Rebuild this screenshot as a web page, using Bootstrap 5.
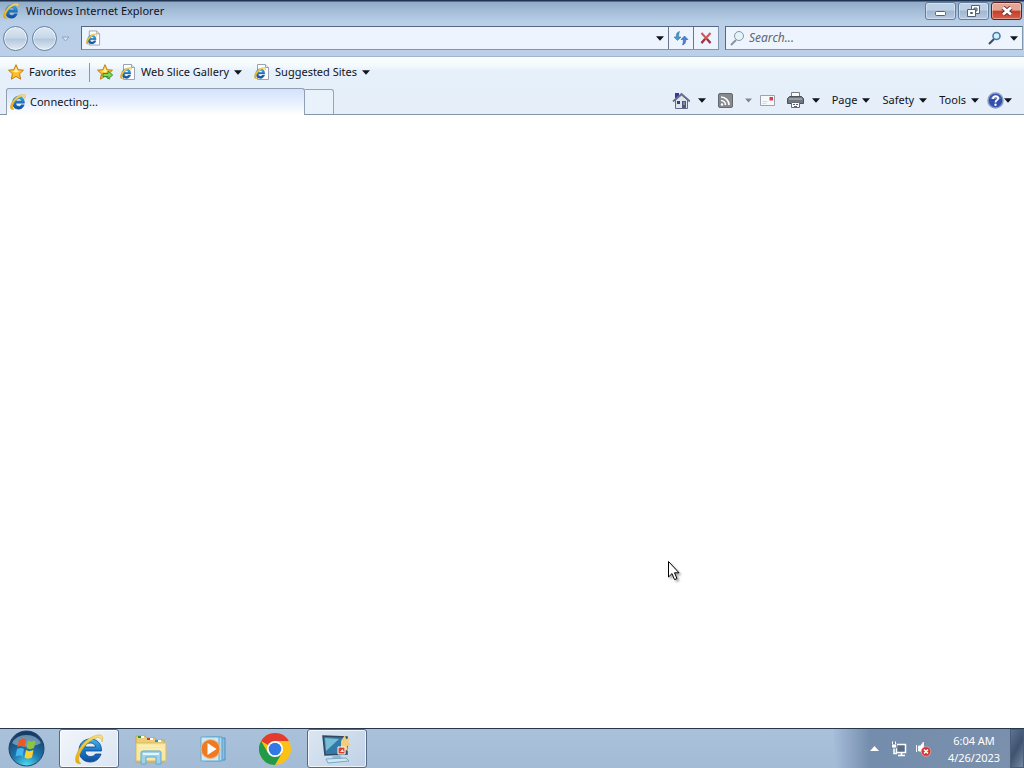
<!DOCTYPE html>
<html lang="en">
<head>
<meta charset="utf-8">
<meta name="viewport" content="width=device-width, initial-scale=1">
<title>Windows Internet Explorer</title>
<link href="https://cdn.jsdelivr.net/npm/bootstrap@5.3.0/dist/css/bootstrap.min.css" rel="stylesheet">
<style>
body{font-family:"Noto Sans","Open Sans",sans-serif;font-size:11px;line-height:16px;color:#10141c;background:#fff;overflow:hidden}
svg{display:block;flex:none}
button{font:inherit;color:inherit;border:0;background:none;padding:0;display:flex;align-items:center}
.title-bar{height:22px;background:linear-gradient(#1d3350 0,#1d3350 1px,#91abc8 2px,#a6bed9 12px,#b9cfe8);padding:0 2px 0 3px}
.title-bar h1{font-size:11px;line-height:20px;font-weight:400;margin-left:7px}
.win-controls{gap:2px}
.win-btn{width:31px;height:18px;justify-content:center;border:1px solid #637d9c;border-radius:3px;background:linear-gradient(#bccfe5 45%,#9fb7d2 50%,#b7cbe1);box-shadow:inset 0 0 0 1px #ffffff60}
.win-close{border-color:#5d2222;background:linear-gradient(#e2a596 45%,#c63d28 50%,#d4614a)}
.nav-bar{height:35px;background:linear-gradient(#b9cfe8,#bccfe8);border-bottom:1px solid #a0b6cf;padding:4px 1px 0 3px}
.round-btn{width:25px;height:25px;border-radius:50%;border:1px solid #66809f;background:linear-gradient(#dce7f3 0,#c8d7e8 48%,#b3c7dc 52%,#e0ebf6);box-shadow:inset 0 0 0 1px #ffffffa0}
.field-box{height:24px;background:#edf4fd;border:1px solid #8295ae;border-top-color:#56687f;border-left-color:#56687f}
.field-box input{border:0;outline:0;background:none;min-width:0;padding:0;font:inherit}
.field-box input::placeholder{color:#5e6570;font-style:italic;opacity:1}
.address-box{margin:0 6px 0 3px}
.search-box{width:298px}
.search-box input{font-size:12px;margin-left:3px}
.box-btn{width:25px;justify-content:center;border-left:1px solid #66778e}
.tool-area{background:linear-gradient(#fbfeff 0,#f3f9fe 9px,#e6f0fa 14px,#e5eef9);border-bottom:1px solid #8394a8}
.fav-bar{height:31px;padding:0 8px 1px}
.fav-bar button{gap:5px}
.fav-add{margin-right:3px}
.fav-sep{width:1px;height:19px;background:#8a97a8;margin:0 7px 0 13px}
.tab-row{height:26px;padding-left:6px}
.tab-main{width:299px;height:27px;border:1px solid #8f9fb4;border-bottom:0;border-radius:3px 3px 0 0;background:linear-gradient(#d3e2fb,#e6effd 50%,#fff);padding-left:3px}
.tab-new{width:29px;height:25px;border:1px solid #95a4b7;border-left:0;border-bottom:0;border-radius:0 3px 0 0;background:#e9f1fb;margin-top:1px}
.command-bar{padding:0 12px 2px 0}
.menu-item{gap:5px}
.page-area{background:#fff}
.task-bar{height:40px;border-top:1px solid #25364d;background:linear-gradient(#aac1dc,#a4bbd6)}
.task-btn{width:60px;height:39px;justify-content:center;border-radius:3px}
.task-icons{gap:2px}
.task-open{border:1px solid #546b88;background:linear-gradient(135deg,#dbe6f2,#c0d1e6);box-shadow:inset 0 0 0 1px #ffffffb0}
.task-live{background:linear-gradient(135deg,#f1f5fa,#dae5f2)}
.start-btn{width:57px;padding-left:8px}
.tray{width:190px;color:#fff;background:linear-gradient(90deg,#a6bdd8 0,#748dad 36px,#7a90ac)}
.clock{width:68px;text-align:center;line-height:17px}
.desk-btn{width:14px;border:1px solid #4a5d77;background:linear-gradient(120deg,#5d7391,#3f536f 50%,#7589a3);margin-left:2px}
.feed-btn{color:#7d8797}
.pointer-mark{position:absolute;left:668px;top:561px;filter:drop-shadow(2px 2px 1px #0005)}
</style>
</head>
<body class="vh-100 d-flex flex-column">
<svg width="0" height="0" class="position-absolute" aria-hidden="true">
<defs>
<linearGradient id="blue" x1="0" y1="0" x2="0" y2="1"><stop offset="0" stop-color="#3fb6ea"/><stop offset=".5" stop-color="#1a78c8"/><stop offset="1" stop-color="#0f4d9c"/></linearGradient>
<linearGradient id="gold" x1="0" y1="1" x2="1" y2="0"><stop offset="0" stop-color="#e8a80c"/><stop offset=".6" stop-color="#f6cf43"/><stop offset="1" stop-color="#f9e08a"/></linearGradient>
<radialGradient id="orb" cx=".5" cy="1" r=".95"><stop offset="0" stop-color="#4ce0f6"/><stop offset=".45" stop-color="#1f78ae"/><stop offset="1" stop-color="#153a66"/></radialGradient>
<symbol id="ie" viewBox="0 0 32 32"><path d="M29 18.500H12c0 4 2 6 5.500 6 2.300 0 4-1 5-3h6c-2 6-6 9-11.500 9C9.500 30.500 5 25 5 17.500S10 4.500 17 4.500s12 5 12 14zM22.500 14c0-3-2-4.500-5.200-4.500S12.300 11 12 14z" fill="url(#blue)" stroke="#124a88" stroke-width=".8"/><path d="M8 31c-7 1-9-3-6-11C6 10 17 1 26 .5c6 0 6.500 4 3.500 8.500 0-4-2-5.200-5-4.500C17 6.500 10 13 7 20.500c-2 5-2 8 1 10.500z" fill="url(#gold)" stroke="#b98a1c" stroke-width=".5"/></symbol>
<symbol id="iepage" viewBox="0 0 16 16"><path d="M3.500.5h8l3 3v12h-11z" fill="#fff" stroke="#9aa3af"/><path d="M11.500.5v3h3" fill="#e6e9ed" stroke="#9aa3af"/><use href="#ie" x="0" y="3" width="12" height="12"/></symbol>
<symbol id="star" viewBox="0 0 16 16"><path d="M8 .7l2.200 5 5.300.5-4 3.600 1.200 5.400L8 12.400l-4.700 2.800 1.200-5.400-4-3.600 5.300-.5z" fill="#fbc02b" stroke="#c47c12"/><path d="M8 3l1.300 3.500L12 7 8 8.500 4 7l2.700-.5z" fill="#fff0a5"/></symbol>
<symbol id="down" viewBox="0 0 7 4"><path d="M0 0h7L3.500 4z" fill="currentColor"/></symbol>
</defs>
</svg>

<header class="title-bar d-flex align-items-center">
<svg width="16" height="16"><use href="#ie"/></svg>
<h1 class="mb-0 flex-grow-1">Windows Internet Explorer</h1>
<div class="win-controls d-flex">
<button class="win-btn" aria-label="Minimize"><svg width="13" height="10"><rect x="1.500" y="5.500" width="10" height="4" rx="1" fill="#fff" stroke="#50627a"/></svg></button>
<button class="win-btn" aria-label="Restore"><svg width="13" height="12"><path d="M4.500.5h8v8h-8z" fill="#fff" stroke="#50627a"/><path d="M7 3h3v3H7z" fill="#9fb5ce" stroke="#50627a"/><path d="M.5 4.500h8v7h-8z" fill="#fff" stroke="#50627a"/><path d="M3.500 7.500h2v1h-2z" fill="#9fb5ce" stroke="#50627a"/></svg></button>
<button class="win-btn win-close" aria-label="Close"><svg width="12" height="10"><path d="M2 1.500l8 7m0-7l-8 7" stroke="#6b2f2d" stroke-width="4.600"/><path d="M2 1.500l8 7m0-7l-8 7" stroke="#fff" stroke-width="2.800"/></svg></button>
</div>
</header>

<nav class="nav-bar d-flex align-items-start">
<div class="d-flex align-items-center gap-1">
<button class="round-btn" aria-label="Back"></button>
<button class="round-btn" aria-label="Forward"></button>
<button class="me-2" aria-label="Recent pages"><svg width="9" height="6"><path d="M1 1h7L4.500 5z" fill="#d8e5f3" stroke="#8fa5c0"/></svg></button>
</div>
<form class="field-box address-box d-flex align-items-stretch flex-grow-1">
<svg class="align-self-center ms-1" width="15" height="16"><use href="#iepage"/></svg>
<input class="flex-grow-1" type="text" aria-label="Address">
<button type="button" class="px-1" aria-label="Show addresses"><svg class="me-px" width="8" height="5"><use href="#down"/></svg></button>
<button type="button" class="box-btn" aria-label="Refresh"><svg width="16" height="16"><path d="M6.500 1.500C4 2 3.200 4 3.200 7H1l3.500 3.500L8 7H5.700c0-2 0-3.500.8-5.500z" fill="#3e9bd0" stroke="#2e6690" stroke-width=".5"/><path d="M9.500 15c2.500-.5 3.300-2.500 3.300-5.500H15L11.500 6 8 9.500h2.300c0 2 0 3.500-.8 5.500z" fill="#4f82d6" stroke="#27518f" stroke-width=".5"/></svg></button>
<button type="button" class="box-btn" aria-label="Stop"><svg width="14" height="14"><path d="M2.500 2l9 10m0-10l-9 10" stroke="#d4535a" stroke-width="2"/><path d="M8 8l3.500 4M6 8l-3.500 4" stroke="#963a43" stroke-width="2"/></svg></button>
</form>
<form class="field-box search-box d-flex align-items-center">
<svg class="ms-1" width="16" height="16"><path d="M1 15l5-5" stroke="#8694a5" stroke-width="2"/><circle cx="9" cy="6" r="4.500" fill="#e5f2f8" stroke="#8795a5"/></svg>
<input class="flex-grow-1" type="text" placeholder="Search..." aria-label="Search">
<button type="button" aria-label="Start search"><svg width="14" height="14"><path d="M1 13l5-5" stroke="#354f70" stroke-width="2.200"/><circle cx="8.500" cy="5" r="3.500" fill="#d2effa" stroke="#487ca5" stroke-width="1.600"/></svg></button>
<button type="button" class="ms-2 me-1" aria-label="Search options"><svg width="8" height="5"><use href="#down"/></svg></button>
</form>
</nav>

<div class="tool-area">
<div class="fav-bar d-flex align-items-center">
<button><svg width="16" height="16"><use href="#star"/></svg>Favorites</button>
<div class="fav-sep"></div>
<button class="fav-add" aria-label="Add to Favorites bar"><svg width="16" height="16"><use href="#star"/><path d="M6 9.500h5V7l4.700 4-4.700 4v-2.500H6z" fill="#7ed956" stroke="#2f9130"/></svg></button>
<button class="ms-1"><svg width="16" height="16"><use href="#iepage"/></svg>Web Slice Gallery<svg width="8" height="5"><use href="#down"/></svg></button>
<button class="ms-2 ps-1"><svg width="16" height="16"><use href="#iepage"/></svg>Suggested Sites<svg width="8" height="5"><use href="#down"/></svg></button>
</div>
<div class="tab-row d-flex align-items-start">
<button class="tab-main gap-1"><svg width="16" height="16"><use href="#ie"/></svg>Connecting...</button>
<button class="tab-new" aria-label="New tab"></button>
<div class="command-bar d-flex align-items-center ms-auto h-100 gap-2">
<button class="gap-2" aria-label="Home"><svg width="18" height="17"><path d="M3 1h4v5H3z" fill="#3837a5"/><path d="M3.500 8v8.500h12V8l-6-5z" fill="#dfe4f0" stroke="#626a88"/><path d="M1 9.500l8.500-7.500L18 9.500" fill="none" stroke="#65708f" stroke-width="1.800"/><path d="M5 9h3v3H5z" fill="#38427d"/><path d="M10 9h4v7h-4z" fill="#515877"/><path d="M11.500 10h1v3h-1z" fill="#aab3d2"/></svg><svg width="8" height="5"><use href="#down"/></svg></button>
<button class="feed-btn gap-2 ms-1" aria-label="Feeds"><svg class="me-1" width="15" height="15"><rect x=".5" y=".5" width="14" height="14" rx="1.500" fill="#87898d" stroke="#65686e"/><circle cx="4" cy="11.500" r="1.200" fill="#fff"/><path d="M3 7.500a4.500 4.500 0 0 1 4.500 4.500M3 4a8 8 0 0 1 8 8" fill="none" stroke="#fff" stroke-width="1.600"/></svg><svg width="7" height="5"><use href="#down"/></svg></button>
<button aria-label="Read mail"><svg width="15" height="11"><path d="M.5.5h14v10H.5z" fill="#f6f8fb" stroke="#9ba3ae"/><path d="M9.500 2h3.500v3.500H9.500z" fill="#d64242"/><path d="M2.500 6.500h5m-5 2h4" stroke="#d5dae2"/></svg></button>
<button class="gap-2 ms-1" aria-label="Print"><svg width="17" height="16"><path d="M4.500.5h8v6h-8z" fill="#fafafa" stroke="#777f88"/><path d="M.5 6.500l2-2h12l2 2v5H.5z" fill="#70767e" stroke="#4c535b"/><path d="M2 7h13" stroke="#c4c9ce"/><path d="M4.500 10.500h8v5h-8z" fill="#fff" stroke="#646b72"/><path d="M6 12.500h2m1 0h2m-4 2h3" stroke="#59616a"/></svg><svg width="8" height="5"><use href="#down"/></svg></button>
<button class="menu-item ms-1">Page<svg width="8" height="5"><use href="#down"/></svg></button>
<button class="menu-item ms-1">Safety<svg width="8" height="5"><use href="#down"/></svg></button>
<button class="menu-item ms-1">Tools<svg width="8" height="5"><use href="#down"/></svg></button>
<button aria-label="Help"><svg width="17" height="17"><circle cx="8.500" cy="8.500" r="7.500" fill="#2f50ae" stroke="#8b9ac0" stroke-width="1.500"/><path d="M3 7a6 5 0 0 1 11 0z" fill="#6f88cc"/><path d="M6 7c0-4 5.500-3.500 5.200-.5-.2 1.700-2.700 1.500-2.700 4" fill="none" stroke="#fff" stroke-width="1.800"/><circle cx="8.500" cy="12.800" r="1.200" fill="#fff"/></svg><svg width="8" height="5"><use href="#down"/></svg></button>
</div>
</div>
</div>

<main class="page-area flex-grow-1"></main>

<footer class="task-bar d-flex align-items-stretch">
<div class="task-icons d-flex">
<button class="start-btn" aria-label="Start"><svg width="37" height="37" viewBox="0 0 37 37"><circle cx="18.500" cy="18.500" r="17.500" fill="url(#orb)" stroke="#27425f"/><path d="M4 13a16 14 0 0 1 29 0c-8 5-21 5-29 0z" fill="#bfd8e8" opacity=".5"/><path d="M11 10c3-2 5-2 7-.5L16.500 17c-2-1.500-4-1.500-7 0z" fill="#ee5822"/><path d="M20 10.500c2 1.500 4 1.500 7.500 0L26 18c-3 1.500-5 1.500-7.500 0z" fill="#8dc63e"/><path d="M9 19c3-1.500 5-1.500 7 0l-1.500 7.500c-2-1.500-4-1.500-7 0z" fill="#42b6ee"/><path d="M18 20c2 1.500 4 1.500 7.500 0L24 27.500c-3 1.500-5 1.500-7.500 0z" fill="#ffd034"/></svg></button>
<button class="task-btn task-open task-live" aria-label="Internet Explorer"><svg width="32" height="32" viewBox="0 0 32 32"><path d="M28.500 18H12c.3 3.500 2.300 5.500 5.500 5.500 2.300 0 4-.8 5-2.500h5.600c-2 5.300-5.700 8-10.800 8C10.500 29 6 24.300 6 17.500S10.500 6 17.300 6s11.500 4.500 11.200 12zM22.500 14c-.3-2.600-2.200-4-5.200-4s-5 1.400-5.300 4z" fill="url(#blue)" stroke="#0e4a8c" stroke-width=".8"/><path d="M8 30.500c-5 1-7-2.500-4.500-9C7 12 16 3.500 24.500 2c5-.8 6.500 2 4.500 7-.3-3.500-1.800-5-4.800-4.300C17 6.500 10 13.500 7 21c-1.800 4.700-1.700 7.700 1 9.500z" fill="url(#gold)" stroke="#cc9c20" stroke-width=".4"/></svg></button>
<button class="task-btn" aria-label="Windows Explorer"><svg width="34" height="32"><path d="M2 6V3h9l2 2h8l1 2h8v22H2z" fill="#eace75" stroke="#c6a74c"/><path d="M5 4h5M14 6h5M21 8h6" stroke="#fff" stroke-width="2"/><path d="M4 4h3" stroke="#32913c" stroke-width="2"/><path d="M13 6h3" stroke="#d63a28" stroke-width="2"/><path d="M21 8h3" stroke="#3b89cf" stroke-width="2"/><path d="M2 10h30v18H2z" fill="#f8e8a3" stroke="#d7bd68"/><path d="M4 13h26M4 16h26" stroke="#fff3bd"/><path d="M7 31V20q0-2 2-2h16q2 0 2 2v11h-5v-7H12v7z" fill="#9ed1ec" stroke="#5faacf"/><path d="M9 21h16" stroke="#e2f5ff" stroke-width="2"/></svg></button>
<button class="task-btn" aria-label="Windows Media Player"><svg width="28" height="28"><path d="M11 3h15v22H11z" fill="#89bde1" stroke="#4f91bf"/><path d="M7 2h16v24H7z" fill="#afd9ef" stroke="#5a9fca"/><path d="M2 2h18v24H2z" fill="#cdeaf7" stroke="#63a9cf"/><circle cx="11.500" cy="14" r="9.500" fill="#ee7b23" stroke="#f9b87e"/><path d="M8.500 8l9 6-9 6z" fill="#fff"/></svg></button>
<button class="task-btn" aria-label="Google Chrome"><svg width="32" height="32" viewBox="0 0 32 32"><circle cx="16" cy="16" r="16" fill="#fbc116"/><path d="M16 16L2.140 8A16 16 0 0 1 29.860 8H16z" fill="#e33b2e"/><path d="M2.140 8A16 16 0 0 0 16 32l6.900-12L16 16 9.100 20z" fill="#229a48"/><circle cx="16" cy="16" r="8" fill="#fff"/><circle cx="16" cy="16" r="6.300" fill="#3478e5"/></svg></button>
<button class="task-btn task-open" aria-label="Display settings"><svg width="32" height="30"><path d="M2 2l24 1v17L4 21z" fill="#327aa7" stroke="#33485e" stroke-width="1.500"/><path d="M4 4l14 1L5 17z" fill="#78bdd8"/><path d="M12 21h7l2 4H11z" fill="#8fb8d1"/><path d="M5 25l20-1 3 3-21 2z" fill="#cce8f3" stroke="#78a9c4"/><path d="M24 1l1 4 4-1-2 4 3 3-4 1 1 5-4-2-3 3V7z" fill="#f4cd76"/><path d="M17 13h7v7h-7z" fill="#d8412e" stroke="#fff"/><path d="M19 18l2.500-3 1.500 3z" fill="#f9e2d8"/></svg></button>
</div>
<div class="tray d-flex align-items-center justify-content-end ms-auto">
<button aria-label="Show hidden icons"><svg width="9" height="5"><path d="M0 5l4.500-5L9 5z" fill="#fff"/></svg></button>
<button class="ms-2 ps-1" aria-label="Network"><svg width="16" height="16"><path d="M5.500 3.500h9v8h-9z" fill="#566c87" stroke="#fff" stroke-width="1.500"/><path d="M7 14.500h7m-3.500-3v3M3 6v6.500h3" stroke="#fff" stroke-width="1.500" fill="none"/><path d="M.5 3h5v4h-5zM1.500 1v2m3-2v2" fill="#fff" stroke="#44566f" stroke-width=".6"/><path d="M1.500.5V3m3-2.500V3" stroke="#fff"/></svg></button>
<button class="ms-2" aria-label="Volume muted"><svg width="17" height="16"><path d="M1.500 4v7M3.500 5h2l3-4v13l-3-4h-2z" fill="#fff" stroke="#f1f4f8"/><circle cx="11" cy="10.500" r="4.800" fill="#d63532" stroke="#f1a7a1" stroke-width=".7"/><path d="M9 8.500l4 4m0-4l-4 4" stroke="#fff" stroke-width="1.600"/></svg></button>
<div class="clock ms-2"><div>6:04 AM</div><div>4/26/2023</div></div>
<button class="desk-btn align-self-stretch" aria-label="Show desktop"></button>
</div>
</footer>

<svg class="pointer-mark" width="13" height="20" aria-hidden="true"><path d="M.5.5v15.500l3.500-3.400 2.500 6 2.500-1-2.500-5.800H11z" fill="#fff" stroke="#000"/></svg>
<script src="https://cdn.jsdelivr.net/npm/bootstrap@5.3.0/dist/js/bootstrap.bundle.min.js"></script>
</body>
</html>
